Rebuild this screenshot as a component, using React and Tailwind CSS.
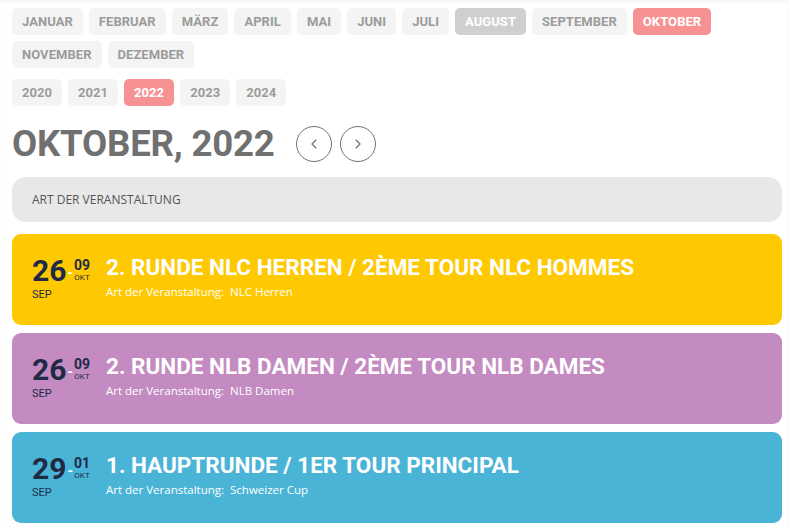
import { ChevronLeft, ChevronRight } from 'lucide-react'

const months = ['Januar', 'Februar', 'März', 'April', 'Mai', 'Juni', 'Juli', 'August', 'September', 'Oktober', 'November', 'Dezember']
const years = ['2020', '2021', '2022', '2023', '2024']

const events = [
  { day: '26', endDay: '09', month: 'SEP', endMonth: 'OKT', title: '2. RUNDE NLC HERREN / 2ÈME TOUR NLC HOMMES', type: 'NLC Herren', bg: 'bg-[#ffc901]' },
  { day: '26', endDay: '09', month: 'SEP', endMonth: 'OKT', title: '2. RUNDE NLB DAMEN / 2ÈME TOUR NLB DAMES', type: 'NLB Damen', bg: 'bg-[#c38bc1]' },
  { day: '29', endDay: '01', month: 'SEP', endMonth: 'OKT', title: '1. HAUPTRUNDE / 1ER TOUR PRINCIPAL', type: 'Schweizer Cup', bg: 'bg-[#4ab4d7]' },
]

function Pill({ label, state }) {
  const cls =
    state === 'active' ? 'bg-[#f79292] text-white' :
    state === 'muted' ? 'bg-[#cfcfcf] text-white' :
    'bg-[#f4f4f4] text-[#9b9b9b]'
  return (
    <button className={`h-[27px] px-[10px] rounded-[5px] text-[13px] font-bold uppercase leading-none tracking-[0.05px] ${cls}`}>
      {label}
    </button>
  )
}

export default function App() {
  return (
    <div className="min-h-screen bg-white pl-3 pr-[7px] pt-2 font-['Roboto',sans-serif] shadow-[inset_0_2px_3px_rgba(0,0,0,0.04)]">

      {/* Months */}
      <div className="flex flex-wrap gap-[6px] max-w-[710px]">
        {months.map(m => (
          <Pill key={m} label={m} state={m === 'Oktober' ? 'active' : m === 'August' ? 'muted' : ''} />
        ))}
      </div>

      {/* Years */}
      <div className="flex gap-[6px] mt-[11px]">
        {years.map(y => (
          <Pill key={y} label={y} state={y === '2022' ? 'active' : ''} />
        ))}
      </div>

      {/* Heading */}
      <div className="flex items-center mt-[20px] h-[36px]">
        <h1 className="text-[36.6px] font-bold text-[#707070] leading-none tracking-[-0.2px]">OKTOBER, 2022</h1>
        <div className="flex gap-2 ml-[21px]">
          <button className="w-9 h-9 rounded-full border border-[#707070] flex items-center justify-center text-[#707070]">
            <ChevronLeft size={16} strokeWidth={1.75} />
          </button>
          <button className="w-9 h-9 rounded-full border border-[#707070] flex items-center justify-center text-[#707070]">
            <ChevronRight size={16} strokeWidth={1.75} />
          </button>
        </div>
      </div>

      {/* Filter */}
      <div className="mt-[15px] h-[45px] rounded-[14px] bg-[#e8e8e8] flex items-center px-5 font-['Open_Sans',sans-serif] text-[12px] text-[#555]">
        ART DER VERANSTALTUNG
      </div>

      {/* Events */}
      <div className="mt-3 flex flex-col gap-2">
        {events.map((e, i) => (
          <div key={i} className={`${e.bg} h-[91px] rounded-[9px] flex pl-5 pt-[22px]`}>
            <div className="w-[74px] shrink-0">
              <div className="flex items-start">
                <span className="text-[30px] font-bold text-[#1f2a44] leading-none">{e.day}</span>
                <span className="text-white font-bold text-[14px] leading-none mt-[10px] mx-[1px]">-</span>
                <div className="flex flex-col items-center">
                  <span className="text-[14px] font-bold text-[#1f2a44] leading-none mt-[2px]">{e.endDay}</span>
                  <span className="text-[8px] text-[#1f2a44] leading-none mt-[2px]">{e.endMonth}</span>
                </div>
              </div>
              <div className="text-[11px] text-[#1f2a44] leading-none mt-[3px]">{e.month}</div>
            </div>
            <div>
              <div className="text-white font-bold text-[22.5px] leading-none">{e.title}</div>
              <div className="text-white text-[11.5px] font-['Open_Sans',sans-serif] mt-[7px] leading-none">
                Art der Veranstaltung:&nbsp; {e.type}
              </div>
            </div>
          </div>
        ))}
      </div>
    </div>
  )
}
